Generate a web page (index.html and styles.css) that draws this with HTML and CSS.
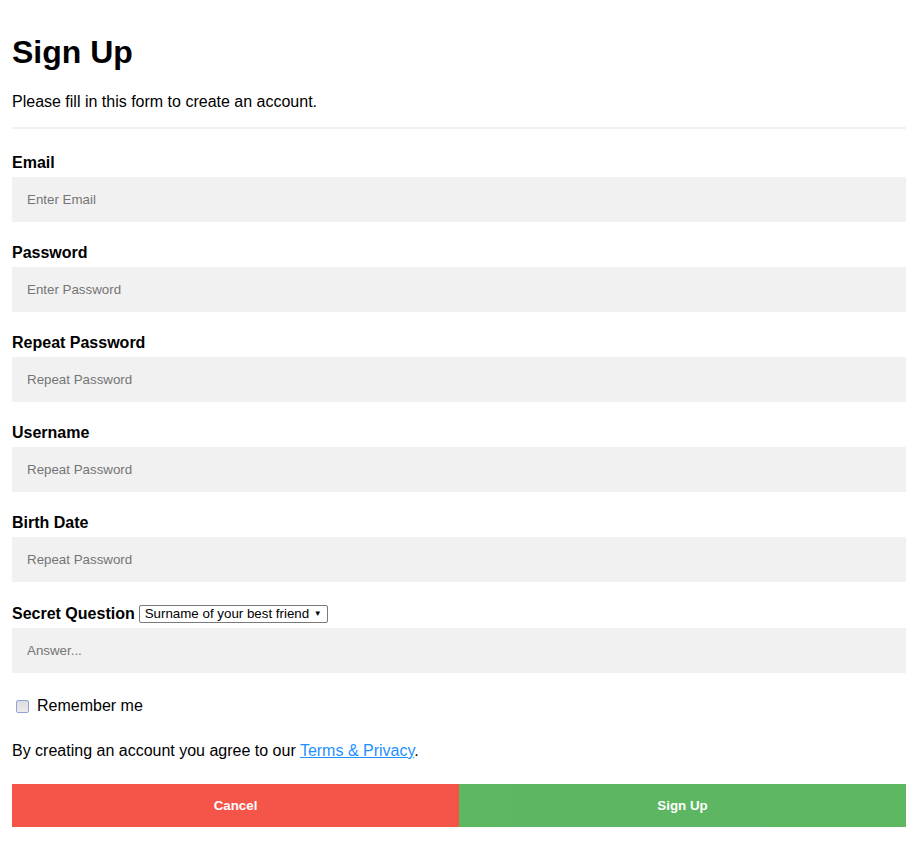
FILE: index.html
```html
<!DOCTYPE html>
<html>
<head>
<meta charset="utf-8">
<title>Sign Up</title>
<link rel="stylesheet" href="styles.css">
</head>
<body>
<form class="container">
  <h1 class="title">Sign Up</h1>
  <p class="intro">Please fill in this form to create an account.</p>
  <hr class="divider">

  <label class="field-label" for="email">Email</label>
  <input class="field-input" type="text" id="email" placeholder="Enter Email">

  <label class="field-label" for="psw">Password</label>
  <input class="field-input" type="password" id="psw" placeholder="Enter Password">

  <label class="field-label" for="psw-repeat">Repeat Password</label>
  <input class="field-input" type="password" id="psw-repeat" placeholder="Repeat Password">

  <label class="field-label" for="username">Username</label>
  <input class="field-input" type="text" id="username" placeholder="Repeat Password">

  <label class="field-label" for="birth">Birth Date</label>
  <input class="field-input" type="text" id="birth" placeholder="Repeat Password">

  <div class="question-row">
    <label class="question-label" for="question">Secret Question</label>
    <span class="select-wrap">
      <select class="question-select" id="question">
        <option>Surname of your best friend</option>
      </select>
    </span>
  </div>
  <input class="field-input answer" type="text" placeholder="Answer...">

  <label class="remember">
    <input class="remember-box" type="checkbox">
    <span class="remember-text">Remember me</span>
  </label>

  <p class="terms">By creating an account you agree to our <a class="terms-link" href="#">Terms &amp; Privacy</a>.</p>

  <div class="buttons">
    <button type="button" class="btn btn-cancel">Cancel</button>
    <button type="submit" class="btn btn-signup">Sign Up</button>
  </div>
</form>
</body>
</html>
```
FILE: styles.css
```css
html, body {
  margin: 0;
  padding: 0;
  background: #ffffff;
}

body {
  font-family: "Liberation Sans", Arial, sans-serif;
  font-size: 16px;
  color: #000;
}

.container {
  padding: 12px 11px 0 12px;
  display: flex;
  flex-direction: column;
}

.title {
  font-size: 32px;
  font-weight: bold;
  line-height: 37px;
  margin: 22px 0 22px 0;
}

.intro {
  margin: 0 0 16px 0;
  line-height: 18px;
}

.divider {
  width: 100%;
  box-sizing: border-box;
  border: 1px solid #f1f1f1;
  margin: 0 0 25px 0;
  height: 0;
}

.field-label {
  display: block;
  font-weight: bold;
  line-height: 18px;
  height: 18px;
}

.field-input {
  display: block;
  width: 100%;
  box-sizing: border-box;
  height: 45px;
  padding: 0 15px;
  margin: 5px 0 22px 0;
  border: none;
  background: #f1f1f1;
  font-family: "Liberation Sans", Arial, sans-serif;
  font-size: 13.33px;
  color: #000;
  outline: none;
}

.field-input::placeholder {
  color: #757575;
}

.question-row {
  display: flex;
  align-items: center;
  height: 19px;
}

.question-label {
  font-weight: bold;
  line-height: 18px;
}

.select-wrap {
  position: relative;
  display: inline-block;
  margin-left: 4px;
  height: 18px;
}

.select-wrap::after {
  content: "\25BC";
  position: absolute;
  right: 6px;
  top: 5px;
  font-size: 8px;
  line-height: 8px;
  color: #000;
  pointer-events: none;
}

.question-select {
  -webkit-appearance: none;
  appearance: none;
  display: block;
  width: 189px;
  height: 18px;
  box-sizing: border-box;
  padding: 0 18px 0 5px;
  border: 1px solid #7a7a7a;
  border-radius: 2px;
  background: #ffffff;
  font-family: "Liberation Sans", Arial, sans-serif;
  font-size: 13.33px;
  line-height: 16px;
  color: #000;
  outline: none;
}

.answer {
  margin-top: 5px;
}

.remember {
  display: flex;
  align-items: center;
  height: 20px;
  margin: 1px 0 26px 0;
}

.remember-box {
  -webkit-appearance: none;
  appearance: none;
  width: 13px;
  height: 13px;
  box-sizing: border-box;
  margin: 0 8px 0 4px;
  border: 1px solid #8da4d4;
  border-radius: 2px;
  background: linear-gradient(#dcdcdc, #ececec);
}

.remember-text {
  line-height: 18px;
}

.terms {
  margin: 0;
  line-height: 18px;
}

.terms-link {
  color: #1e90ff;
  text-decoration: underline;
}

.buttons {
  display: flex;
  margin-top: 24px;
}

.btn {
  flex: 1 1 0;
  height: 43px;
  border: none;
  margin: 0;
  padding: 0 20px;
  color: #ffffff;
  font-family: "Liberation Sans", Arial, sans-serif;
  font-size: 13.33px;
  font-weight: bold;
  opacity: 0.9;
  cursor: pointer;
}

.btn-cancel {
  background: #f44336;
}

.btn-signup {
  background: #4caf50;
}
```
